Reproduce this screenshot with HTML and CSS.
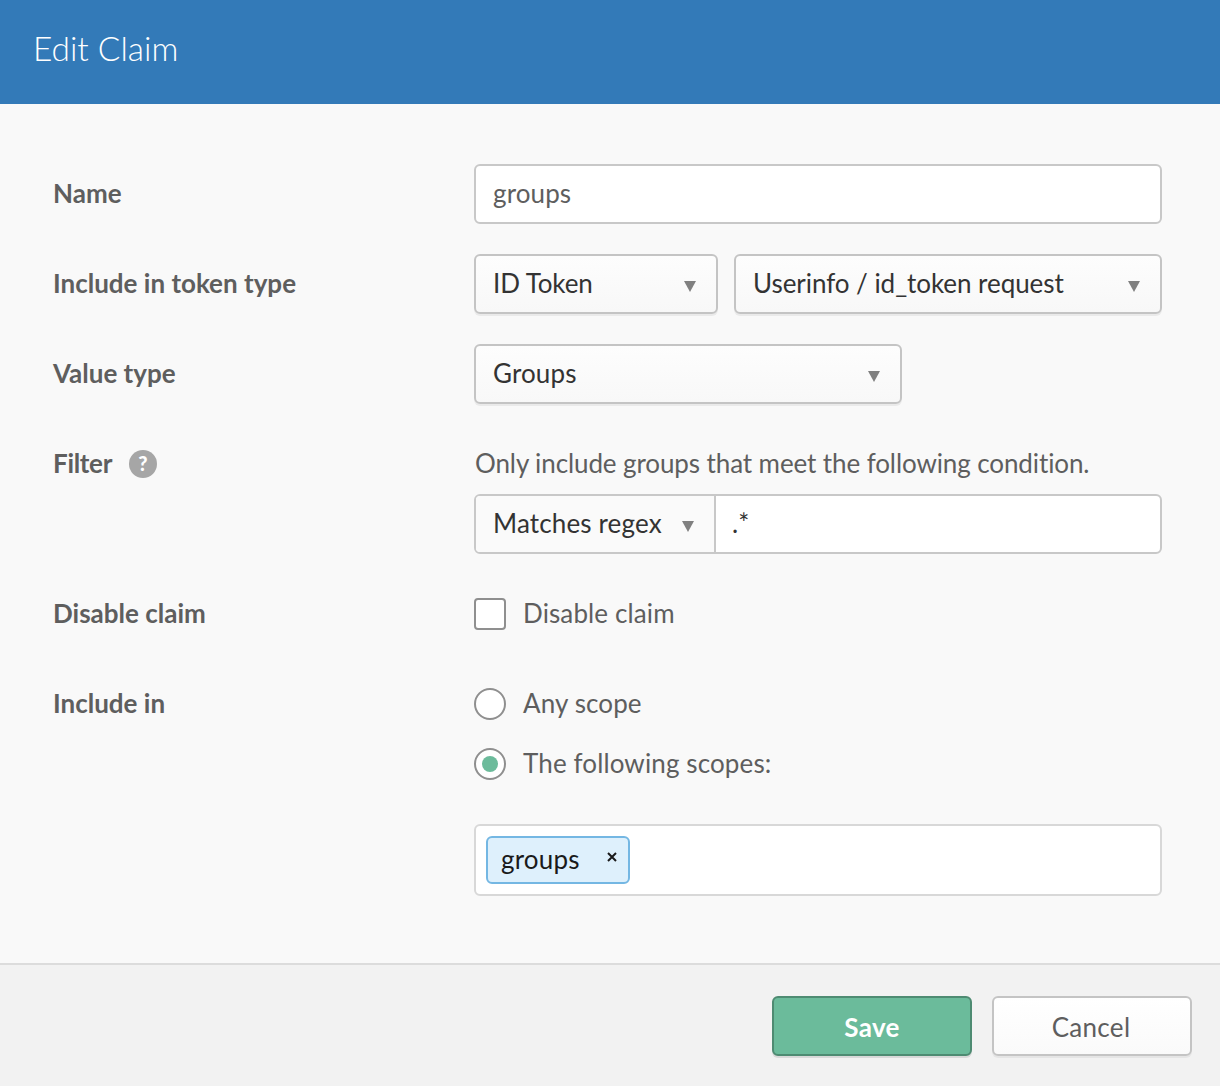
FILE: index.html
```html
<!DOCTYPE html>
<html lang="en">
<head>
<meta charset="utf-8">
<title>Edit Claim</title>
<link rel="stylesheet" href="styles.css">
</head>
<body>
<div class="dialog">
  <header class="header"><h1 class="title">Edit Claim</h1></header>
  <main class="form">
    <div class="row">
      <div class="label">Name</div>
      <div class="field"><div class="input">groups</div></div>
    </div>
    <div class="row">
      <div class="label">Include in token type</div>
      <div class="field split">
        <div class="select select-id"><span class="id-text">ID Token</span><i class="caret"></i></div>
        <div class="select select-userinfo"><span class="tight">Userinfo / id_token request</span><i class="caret"></i></div>
      </div>
    </div>
    <div class="row">
      <div class="label">Value type</div>
      <div class="field"><div class="select select-value"><span>Groups</span><i class="caret"></i></div></div>
    </div>
    <div class="row">
      <div class="label label-help"><span class="filter-text">Filter</span>
        <svg class="help" width="28" height="28" viewBox="0 0 28 28" aria-hidden="true"><circle cx="14" cy="14" r="14" fill="#a6a6a6"/><text x="14" y="21" text-anchor="middle" class="help-mark">?</text></svg>
      </div>
      <div class="field">
        <div class="hint">Only include groups that meet the following condition.</div>
        <div class="combo">
          <div class="combo-select"><span>Matches regex</span><i class="caret"></i></div>
          <div class="combo-input">.*</div>
        </div>
      </div>
    </div>
    <div class="row">
      <div class="label">Disable claim</div>
      <div class="field"><div class="option"><span class="checkbox"></span><span>Disable claim</span></div></div>
    </div>
    <div class="row">
      <div class="label">Include in</div>
      <div class="field">
        <div class="option"><span class="radio"></span><span>Any scope</span></div>
        <div class="option"><span class="radio radio-on"></span><span>The following scopes:</span></div>
        <div class="tags">
          <div class="tag"><span>groups</span><svg class="tag-x" width="10" height="10" viewBox="0 0 10 10" aria-hidden="true"><path d="M1 1 9 9M9 1 1 9" stroke="#1a1a1a" stroke-width="2"/></svg></div>
        </div>
      </div>
    </div>
  </main>
  <footer class="footer">
    <button class="btn btn-save">Save</button>
    <button class="btn btn-cancel">Cancel</button>
  </footer>
</div>
</body>
</html>
```

FILE: styles.css
```css
* { box-sizing: border-box; }
html, body { margin: 0; padding: 0; }
body {
  width: 1220px;
  height: 1086px;
  overflow: hidden;
  font-family: "Lato", "Open Sans", sans-serif;
  font-size: 26px;
  font-variant-ligatures: none;
  letter-spacing: 0.12px;
  color: #5e5e5e;
  background: #f9f9f9;
}
.dialog { display: flex; flex-direction: column; height: 1086px; }
.header {
  height: 104px;
  background: #337ab8;
  display: flex;
  align-items: center;
  padding: 0 0 9px 33px;
  flex: none;
}
.title { margin: 0; font-size: 33.4px; font-weight: 300; letter-spacing: 0; color: #fff; }
.form { flex: 1; padding: 60px 58px 0 53px; background: #f9f9f9; }
.row { display: grid; grid-template-columns: 421px 688px; margin-bottom: 30px; }
.label { font-weight: 700; line-height: 58px; height: 60px; color: #5e5e5e; letter-spacing: 0; }
.label-help { display: flex; align-items: center; gap: 17px; height: 58px; }
.filter-text { letter-spacing: -0.3px; }
.help { flex: none; margin-top: 2px; }
.help-mark { font-family: "Lato", sans-serif; font-weight: 900; font-size: 20px; fill: #fff; }
.input {
  height: 60px;
  line-height: 54px;
  padding: 0 17px;
  background: #fff;
  border: 2px solid #c8c8c8;
  border-radius: 6px;
}
.split { display: flex; gap: 16px; }
.select {
  height: 60px;
  display: flex;
  align-items: center;
  justify-content: space-between;
  padding: 0 20px 0 17px;
  color: #333;
  line-height: 54px;
  background: linear-gradient(#fdfdfd, #f8f8f8);
  border: 2px solid #c4c4c4;
  border-radius: 6px;
  box-shadow: 0 2px 0 rgba(0, 0, 0, 0.06);
}
.select span, .combo-select span { margin-bottom: 2px; }
.tight { letter-spacing: -0.05px; }
.id-text { letter-spacing: -0.1px; }
.select-id { width: 244px; }
.select-userinfo { width: 428px; }
.select-value { width: 428px; }
.caret {
  width: 0;
  height: 0;
  margin-top: 4px;
  border-left: 6px solid transparent;
  border-right: 6px solid transparent;
  border-top: 11px solid #808080;
}
.hint { height: 60px; line-height: 58px; padding-left: 1px; letter-spacing: -0.1px; }
.combo {
  display: flex;
  height: 60px;
  background: #fff;
  border: 2px solid #c8c8c8;
  border-radius: 6px;
  overflow: hidden;
}
.combo-select {
  width: 240px;
  display: flex;
  align-items: center;
  justify-content: space-between;
  padding: 0 20px 0 17px;
  color: #333;
  background: #fafafa;
  border-right: 2px solid #c8c8c8;
  letter-spacing: 0.15px;
}
.combo-input { flex: 1; padding-left: 16px; line-height: 54px; color: #333; }
.option { display: flex; align-items: center; gap: 17px; height: 60px; }
.option span:last-child { margin-bottom: 2px; }
.checkbox {
  width: 32px;
  height: 32px;
  background: #fff;
  border: 2px solid #8f8f8f;
  border-radius: 4px;
}
.option .checkbox, .option .radio { margin-bottom: 0; flex: none; }
.radio {
  width: 32px;
  height: 32px;
  background: #fff;
  border: 2px solid #8f8f8f;
  border-radius: 50%;
  display: flex;
  align-items: center;
  justify-content: center;
}
.radio-on::after {
  content: "";
  width: 16px;
  height: 16px;
  border-radius: 50%;
  background: #6cbb9b;
}
.tags {
  height: 72px;
  margin-top: 30px;
  padding: 10px;
  background: #fff;
  border: 2px solid #d8d8d8;
  border-radius: 6px;
}
.tag {
  width: 144px;
  height: 48px;
  display: flex;
  align-items: center;
  justify-content: space-between;
  padding: 0 11px 0 13px;
  color: #1a1a1a;
  background: #def0fc;
  border: 2px solid #74b7e3;
  border-radius: 6px;
}
.tag span { letter-spacing: 0.2px; margin-bottom: 2px; }
.tag-x { margin-top: -6px; }
.footer {
  flex: none;
  height: 123px;
  display: flex;
  justify-content: flex-end;
  gap: 20px;
  padding: 31px 28px 0 0;
  background: #f2f2f2;
  border-top: 2px solid #dcdcdc;
}
.btn {
  width: 200px;
  height: 60px;
  font: inherit;
  font-variant-ligatures: none;
  border-radius: 6px;
  padding: 2px 0 0;
}
.btn-save {
  color: #fff;
  font-weight: 700;
  letter-spacing: 0.3px;
  background: #6bbb9b;
  border: 2px solid #4e8b72;
  box-shadow: 0 2px 0 rgba(0, 0, 0, 0.1);
}
.btn-cancel {
  color: #5e5e5e;
  letter-spacing: 0.3px;
  padding-right: 2px;
  background: linear-gradient(#fff, #fafafa);
  border: 2px solid #c4c4c4;
  box-shadow: 0 2px 0 rgba(0, 0, 0, 0.05);
}
```
